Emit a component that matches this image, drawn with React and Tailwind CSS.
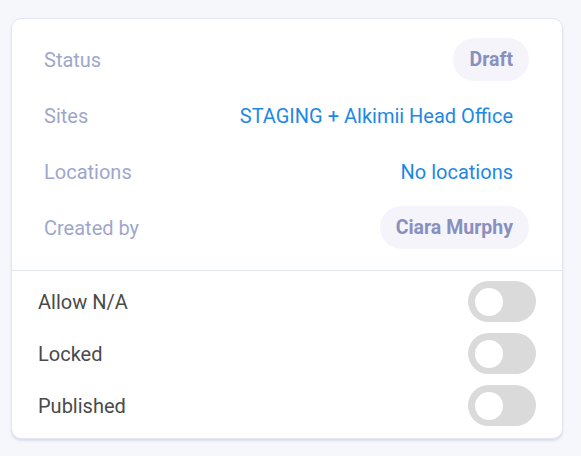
import React, { useState } from 'react';

const Row = ({ label, children }) => (
  <div className="flex h-[43px] items-center justify-between">
    <span className="text-[20px] text-[#9ea7cb]">{label}</span>
    {children}
  </div>
);

const Pill = ({ children }) => (
  <span className="flex h-[43px] items-center rounded-full bg-[#f4f4fa] px-4 text-[19.5px] font-bold text-[#8990bf]">
    {children}
  </span>
);

const Toggle = ({ on, onClick }) => (
  <button
    onClick={onClick}
    className={`flex h-[41px] w-[68px] items-center rounded-full px-[7px] ${on ? 'bg-[#1e88e5] justify-end' : 'bg-[#dadada] justify-start'}`}
  >
    <span className="h-[28px] w-[28px] rounded-full bg-white" />
  </button>
);

export default function App() {
  const [flags, setFlags] = useState({ na: false, locked: false, published: false });
  const toggles = [
    { key: 'na', label: 'Allow N/A' },
    { key: 'locked', label: 'Locked' },
    { key: 'published', label: 'Published' },
  ];

  return (
    <div className="min-h-screen bg-[#f6f7fb] pt-[18px] pl-[11px]" style={{ fontFamily: 'Roboto, sans-serif' }}>
      <div className="w-[552px] rounded-[10px] border border-[#e3e5ef] bg-white shadow-[0_2px_2px_rgba(200,205,225,0.6)]">
        <div className="flex flex-col gap-[13px] pl-[32px] pr-[33px] pt-[19px] pb-[21px]">
          <Row label="Status">
            <Pill>Draft</Pill>
          </Row>
          <Row label="Sites">
            <span className="pr-4 text-[20px] text-[#1e88e5]">STAGING + Alkimii Head Office</span>
          </Row>
          <Row label="Locations">
            <span className="pr-4 text-[20px] text-[#1e88e5]">No locations</span>
          </Row>
          <Row label="Created by">
            <Pill>Ciara Murphy</Pill>
          </Row>
        </div>
        <div className="flex flex-col gap-[11px] border-t border-[#e3e5ef] pl-[26px] pr-[26px] pt-[10px] pb-[12px]">
          {toggles.map((t) => (
            <div key={t.key} className="flex items-center justify-between">
              <span className="text-[20px] text-[#4a4a4a]">{t.label}</span>
              <Toggle
                on={flags[t.key]}
                onClick={() => setFlags((f) => ({ ...f, [t.key]: !f[t.key] }))}
              />
            </div>
          ))}
        </div>
      </div>
    </div>
  );
}
